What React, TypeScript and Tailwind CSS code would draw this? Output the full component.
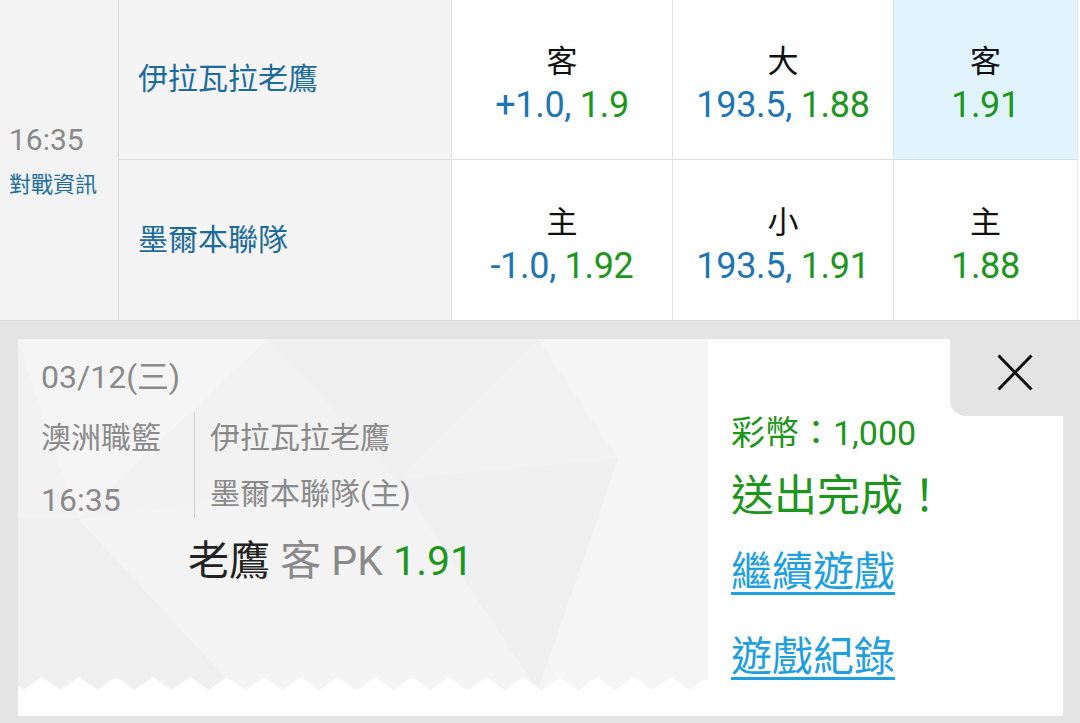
import type { ReactNode } from "react";

const font = "font-['Roboto','Noto_Sans_CJK_TC',sans-serif]";

type Odd = { label: string; line?: string; price: string; active?: boolean };

const topRow: Odd[] = [
  { label: "客", line: "+1.0,", price: "1.9" },
  { label: "大", line: "193.5,", price: "1.88" },
  { label: "客", price: "1.91", active: true },
];

const bottomRow: Odd[] = [
  { label: "主", line: "-1.0,", price: "1.92" },
  { label: "小", line: "193.5,", price: "1.91" },
  { label: "主", price: "1.88" },
];

function OddCell({ odd, className }: { odd: Odd; className?: string }) {
  return (
    <div
      className={`flex flex-col items-center justify-center pt-[9px] ${
        odd.active ? "bg-[#e1f3fc]" : "bg-white"
      } ${className ?? ""}`}
    >
      <div className="text-[31px] leading-[42px] text-[#111]">{odd.label}</div>
      <div className="text-[36px] leading-[44px] tracking-[-0.3px]">
        {odd.line && <span className="text-[#1d75b3]">{odd.line} </span>}
        <span className="text-[#1c961c]">{odd.price}</span>
      </div>
    </div>
  );
}

function TeamCell({ children, className }: { children: ReactNode; className?: string }) {
  return (
    <div className={`flex h-[160px] items-center pl-[19px] pb-[2px] text-[30px] text-[#1c6b9b] ${className ?? ""}`}>
      {children}
    </div>
  );
}

function TicketPattern() {
  // faint low-poly triangles plus the torn zigzag edge at the bottom
  const edge =
    "0,0 690,0 690,338 " +
    Array.from({ length: 20 }, (_, i) => {
      const x = 690 - i * 37;
      return `${x},338 ${x - 18.5},351`;
    }).join(" ") +
    " 0,338";
  return (
    <svg width="690" height="352" viewBox="0 0 690 352" className="absolute left-0 top-0">
      <defs>
        <clipPath id="ticket">
          <polygon points={edge} />
        </clipPath>
      </defs>
      <g clipPath="url(#ticket)">
        <rect width="690" height="352" fill="#f2f2f2" />
        <polygon points="0,0 250,0 60,180" fill="#f5f5f5" />
        <polygon points="250,0 520,0 380,140" fill="#efefef" opacity="0.6" />
        <polygon points="520,0 690,0 690,160 600,120" fill="#f5f5f5" />
        <polygon points="60,180 380,140 220,352" fill="#f4f4f4" />
        <polygon points="380,140 600,120 520,352" fill="#f0f0f0" opacity="0.7" />
        <polygon points="600,120 690,160 690,352 520,352" fill="#f5f5f5" />
        <polygon points="0,180 60,180 220,352 0,352" fill="#efefef" opacity="0.6" />
        <polygon points="220,352 380,140 520,352" fill="#f4f4f4" />
      </g>
    </svg>
  );
}

export default function App() {
  return (
    <div className={`h-[723px] w-[1080px] overflow-hidden bg-[#e4e4e4] ${font}`}>
      <div className="flex h-[321px] border-b border-[#dcdcdc] bg-white">
        <div className="flex w-[119px] flex-col justify-center border-r border-[#d6dadd] bg-[#f3f3f3] pl-[9px] pt-[2px]">
          <div className="text-[30px] leading-[36px] text-[#8a8a8a]">16:35</div>
          <div className="mt-[12px] text-[22px] leading-[30px] text-[#1d6e9e]">對戰資訊</div>
        </div>
        <div className="flex w-[333px] flex-col border-r border-[#dfe3e6] bg-[#f4f4f4]">
          <TeamCell className="border-b border-[#d4dee5]">伊拉瓦拉老鷹</TeamCell>
          <TeamCell>墨爾本聯隊</TeamCell>
        </div>
        <div className="grid w-[626px] grid-cols-[221px_221px_184px] grid-rows-[160px_160px]">
          {topRow.map((o, i) => (
            <OddCell
              key={`t${i}`}
              odd={o}
              className={`border-b border-[#d4dee5] ${i < 2 ? "border-r border-r-[#dfe3e6]" : "border-r border-r-[#e6e6e6]"}`}
            />
          ))}
          {bottomRow.map((o, i) => (
            <OddCell
              key={`b${i}`}
              odd={o}
              className={i < 2 ? "border-r border-[#dfe3e6]" : "border-r border-[#e6e6e6]"}
            />
          ))}
        </div>
      </div>

      <div className="ml-[18px] mt-[18px] flex h-[377px] w-[1045px] bg-white">
        <div className="relative w-[690px]">
          <TicketPattern />
          <div className="relative pl-[23px] pt-[19px] text-[#8a8a8a]">
            <div className="text-[32px] leading-[38px]">03/12(三)</div>
            <div className="mt-[14px] flex items-start">
              <div className="w-[153px] text-[30px]">
                <div className="leading-[56px]">澳洲職籃</div>
                <div className="mt-[6px] text-[32px] leading-[56px]">16:35</div>
              </div>
              <div className="mt-[2px] h-[106px] w-px bg-[#cfcfcf]" />
              <div className="pl-[15px] text-[30px] leading-[56px]">
                <div>伊拉瓦拉老鷹</div>
                <div>墨爾本聯隊(主)</div>
              </div>
            </div>
            <div className="ml-[147px] mt-[6px] text-[41px] leading-[54px]">
              <span className="text-[#222]">老鷹</span> 客 PK <span className="text-[#1c961c]">1.91</span>
            </div>
          </div>
        </div>
        <div className="relative flex-1 bg-white pl-[23px] pt-[74px]">
          <div className="absolute right-0 top-0 h-[77px] w-[113px] rounded-bl-[16px] bg-[#e4e4e4]">
            <svg className="absolute left-[47px] top-[15px]" width="36" height="37" viewBox="0 0 36 37">
              <path d="M1.5 1.5L34.5 35.5M34.5 1.5L1.5 35.5" stroke="#111" strokeWidth="3" fill="none" />
            </svg>
          </div>
          <div className="text-[34px] leading-[40px] text-[#1c961c]">彩幣：1,000</div>
          <div className="mt-[18px] text-[43px] leading-[50px] text-[#1c961c]">送出完成！</div>
          <div className="mt-[26px] text-[41px] leading-[50px] text-[#1ea0e0] underline decoration-[3px] underline-offset-[6px]">
            繼續遊戲
          </div>
          <div className="mt-[35px] text-[41px] leading-[50px] text-[#1ea0e0] underline decoration-[3px] underline-offset-[6px]">
            遊戲紀錄
          </div>
        </div>
      </div>
    </div>
  );
}
